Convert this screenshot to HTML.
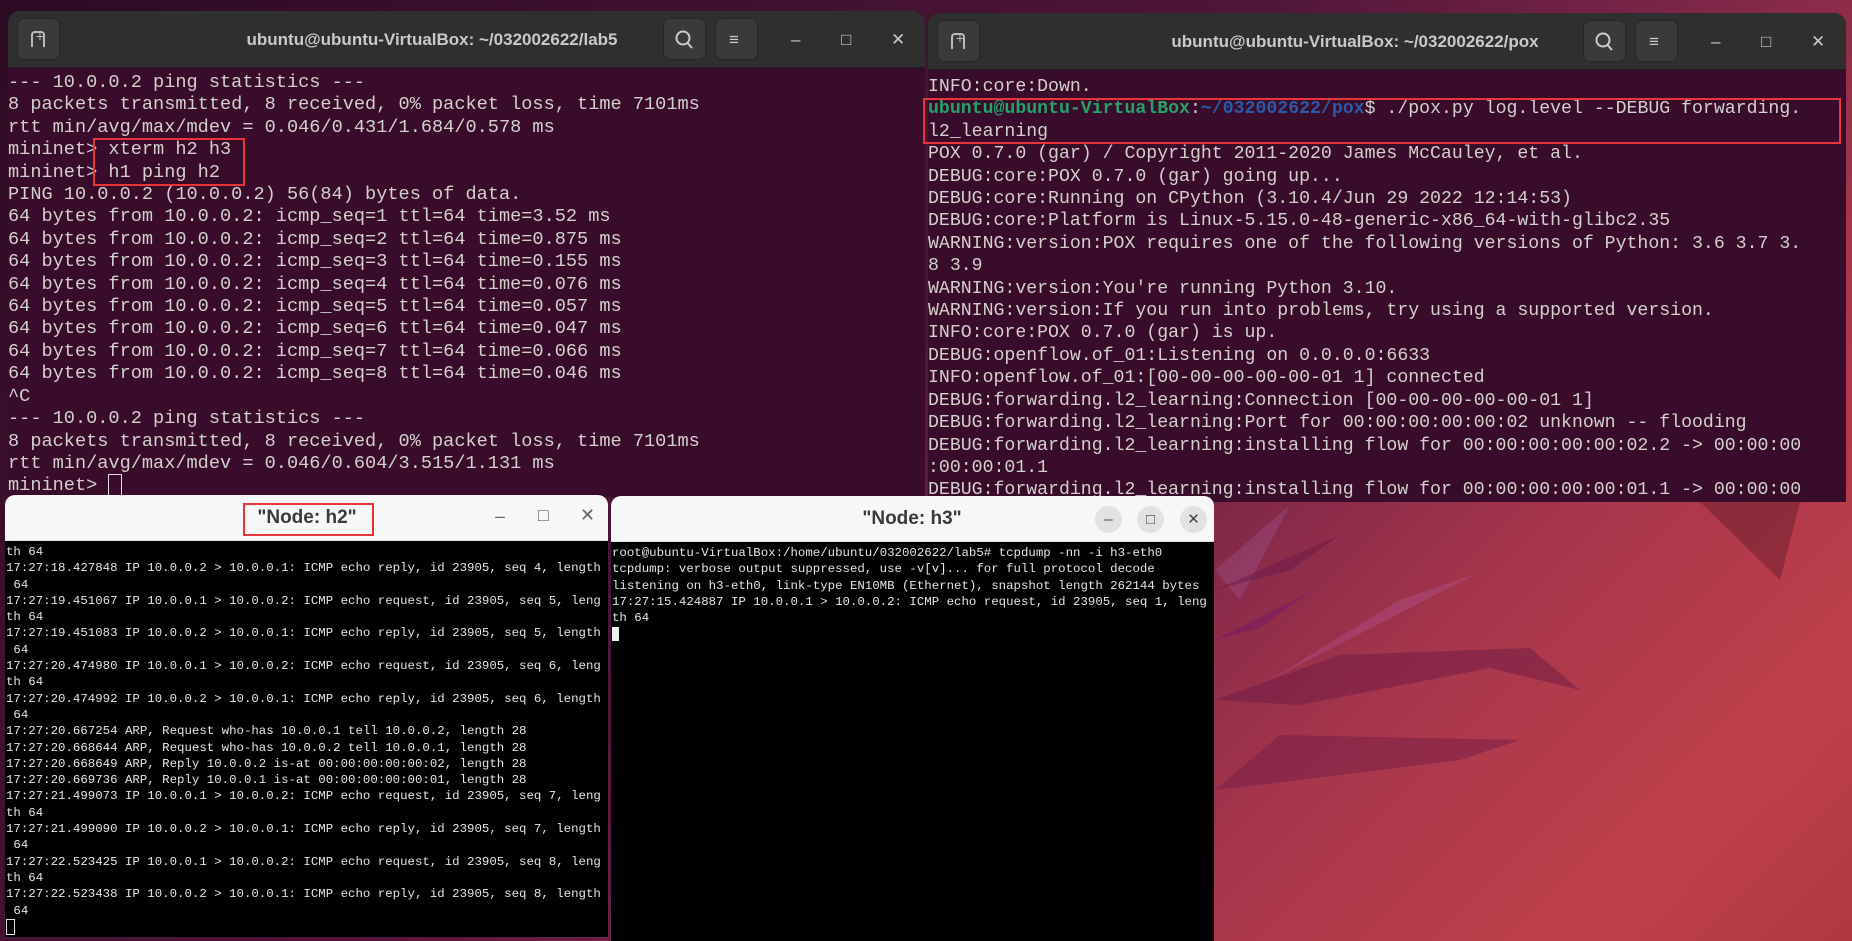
<!DOCTYPE html>
<html><head><meta charset="utf-8"><style>
*{margin:0;padding:0;box-sizing:border-box}
body{width:1852px;height:941px;overflow:hidden;position:relative;font-family:"Liberation Sans",sans-serif;
background:linear-gradient(135deg,#2c0a24 0%,#4e1539 45%,#7a2548 60%,#a8364c 75%,#bf3f4a 90%,#b03842 100%);}
.win{position:absolute;overflow:hidden}
.term{background:#380c2a;border-radius:12px 12px 0 0}
.tb{position:absolute;left:0;right:0;top:0;height:57px;background:#2f2f2f;border-bottom:1px solid #1e1e1e}
.ttl{position:absolute;top:0;height:57px;line-height:57px;color:#c9c9c9;font-weight:bold;font-size:17px;transform:translateX(-50%);white-space:nowrap}
.btn{position:absolute;top:7px;width:43px;height:42px;background:#3a3a3a;border-radius:7px;border:1px solid #262626}
.wc{position:absolute;top:0;height:57px;line-height:57px;color:#c9c9c9;font-size:17px}
pre{position:absolute;font-family:"Liberation Mono",monospace;white-space:pre;margin:0}
.tt{font-size:18.6px;line-height:22.4px;color:#d3d0cc}
.xt{font-size:12.4px;line-height:16.3px;color:#e4e4e4}
.x{background:#000;border-radius:10px 10px 0 0}
.xtb{position:absolute;left:0;right:0;top:0;height:46px;background:#f7f7f7;border-bottom:1px solid #ddd}
.xttl{position:absolute;top:0;height:46px;line-height:46px;font-weight:bold;font-size:19px;color:#3a3a3a;transform:translateX(-50%)}
.rb{position:absolute;border:2px solid #e8353a}
.circ{position:absolute;width:27px;height:27px;border-radius:50%;background:#e2e2e2;color:#444;text-align:center;line-height:27px;font-size:15px}
</style></head><body>
<svg width="1852" height="941" style="position:absolute;left:0;top:0">
<polygon points="1215,570 1290,505 1240,600" fill="#9a4a7e" opacity=".5"/>
<polygon points="1215,590 1340,535 1290,570" fill="#6a1a4a" opacity=".5"/>
<polygon points="1215,640 1310,592 1260,628" fill="#7b1a66" opacity=".6"/>
<polygon points="1270,680 1480,572 1400,600" fill="#b0508a" opacity=".45"/>
<polygon points="1215,700 1340,655 1530,648 1580,690 1490,668 1300,705" fill="#6e1a46" opacity=".5"/>
<polygon points="1215,790 1280,735 1520,740 1460,760 1300,780" fill="#6e1a46" opacity=".45"/>
<polygon points="1700,502 1800,502 1780,580" fill="#4a1020" opacity=".35"/>
</svg>

<!-- Left terminal -->
<div class="win term" style="left:8px;top:11px;width:917px;height:486px">
 <div class="tb">
  <div class="btn" style="left:9px"></div>
  <div style="position:absolute;left:23px;top:20px;width:14px;height:16px;border:2px solid #bbb;border-bottom:none;border-radius:4px 4px 0 0"></div>
  <div style="position:absolute;left:24px;top:17px;color:#bbb;font-size:14px">&nbsp;+</div>
  <div class="ttl" style="left:424px">ubuntu@ubuntu-VirtualBox: ~/032002622/lab5</div>
  <div class="btn" style="left:655px"></div>
  <svg style="position:absolute;left:665px;top:18px" width="22" height="22"><circle cx="10" cy="9" r="6.5" fill="none" stroke="#ccc" stroke-width="2"/><line x1="14.5" y1="14" x2="19" y2="19" stroke="#ccc" stroke-width="2"/></svg>
  <div class="btn" style="left:707px"></div><div class="wc" style="left:721px">&#8801;</div>
  <div class="wc" style="left:783px">&#8211;</div>
  <div class="wc" style="left:833px">&#9633;</div>
  <div class="wc" style="left:883px">&#10005;</div>
 </div>
<pre class="tt" style="left:0;top:61px">--- 10.0.0.2 ping statistics ---
8 packets transmitted, 8 received, 0% packet loss, time 7101ms
rtt min/avg/max/mdev = 0.046/0.431/1.684/0.578 ms
mininet> xterm h2 h3
mininet> h1 ping h2
PING 10.0.0.2 (10.0.0.2) 56(84) bytes of data.
64 bytes from 10.0.0.2: icmp_seq=1 ttl=64 time=3.52 ms
64 bytes from 10.0.0.2: icmp_seq=2 ttl=64 time=0.875 ms
64 bytes from 10.0.0.2: icmp_seq=3 ttl=64 time=0.155 ms
64 bytes from 10.0.0.2: icmp_seq=4 ttl=64 time=0.076 ms
64 bytes from 10.0.0.2: icmp_seq=5 ttl=64 time=0.057 ms
64 bytes from 10.0.0.2: icmp_seq=6 ttl=64 time=0.047 ms
64 bytes from 10.0.0.2: icmp_seq=7 ttl=64 time=0.066 ms
64 bytes from 10.0.0.2: icmp_seq=8 ttl=64 time=0.046 ms
^C
--- 10.0.0.2 ping statistics ---
8 packets transmitted, 8 received, 0% packet loss, time 7101ms
rtt min/avg/max/mdev = 0.046/0.604/3.515/1.131 ms
mininet> <span style="border:1px solid #ddd">&nbsp;</span></pre>
</div>
<div class="rb" style="left:93px;top:138px;width:152px;height:48px"></div>

<!-- Right terminal -->
<div class="win term" style="left:928px;top:13px;width:918px;height:489px">
 <div class="tb">
  <div class="btn" style="left:9px"></div>
  <div style="position:absolute;left:23px;top:20px;width:14px;height:16px;border:2px solid #bbb;border-bottom:none;border-radius:4px 4px 0 0"></div>
  <div style="position:absolute;left:24px;top:17px;color:#bbb;font-size:14px">&nbsp;+</div>
  <div class="ttl" style="left:427px">ubuntu@ubuntu-VirtualBox: ~/032002622/pox</div>
  <div class="btn" style="left:655px"></div>
  <svg style="position:absolute;left:665px;top:18px" width="22" height="22"><circle cx="10" cy="9" r="6.5" fill="none" stroke="#ccc" stroke-width="2"/><line x1="14.5" y1="14" x2="19" y2="19" stroke="#ccc" stroke-width="2"/></svg>
  <div class="btn" style="left:707px"></div><div class="wc" style="left:721px">&#8801;</div>
  <div class="wc" style="left:783px">&#8211;</div>
  <div class="wc" style="left:833px">&#9633;</div>
  <div class="wc" style="left:883px">&#10005;</div>
 </div>
<pre class="tt" style="left:0;top:63px;font-size:18.2px">INFO:core:Down.
<span style="color:#26a269;font-weight:bold">ubuntu@ubuntu-VirtualBox</span>:<span style="color:#2a5aa8;font-weight:bold">~/032002622/pox</span>$ ./pox.py log.level --DEBUG forwarding.
l2_learning
POX 0.7.0 (gar) / Copyright 2011-2020 James McCauley, et al.
DEBUG:core:POX 0.7.0 (gar) going up...
DEBUG:core:Running on CPython (3.10.4/Jun 29 2022 12:14:53)
DEBUG:core:Platform is Linux-5.15.0-48-generic-x86_64-with-glibc2.35
WARNING:version:POX requires one of the following versions of Python: 3.6 3.7 3.
8 3.9
WARNING:version:You're running Python 3.10.
WARNING:version:If you run into problems, try using a supported version.
INFO:core:POX 0.7.0 (gar) is up.
DEBUG:openflow.of_01:Listening on 0.0.0.0:6633
INFO:openflow.of_01:[00-00-00-00-00-01 1] connected
DEBUG:forwarding.l2_learning:Connection [00-00-00-00-00-01 1]
DEBUG:forwarding.l2_learning:Port for 00:00:00:00:00:02 unknown -- flooding
DEBUG:forwarding.l2_learning:installing flow for 00:00:00:00:00:02.2 -> 00:00:00
:00:00:01.1
DEBUG:forwarding.l2_learning:installing flow for 00:00:00:00:00:01.1 -> 00:00:00</pre>
</div>
<div class="rb" style="left:923px;top:98px;width:918px;height:46px"></div>

<!-- Node h2 -->
<div class="win x" style="left:5px;top:495px;width:603px;height:442px">
 <div class="xtb">
  <div class="xttl" style="left:302px">"Node: h2"</div>
  <div style="position:absolute;left:490px;top:11px;color:#666;font-size:18px">&#8211;</div>
  <div style="position:absolute;left:533px;top:10px;color:#666;font-size:18px">&#9633;</div>
  <div style="position:absolute;left:575px;top:10px;color:#666;font-size:18px">&#10005;</div>
 </div>
<pre class="xt" style="left:1px;top:49px">th 64
17:27:18.427848 IP 10.0.0.2 > 10.0.0.1: ICMP echo reply, id 23905, seq 4, length
 64
17:27:19.451067 IP 10.0.0.1 > 10.0.0.2: ICMP echo request, id 23905, seq 5, leng
th 64
17:27:19.451083 IP 10.0.0.2 > 10.0.0.1: ICMP echo reply, id 23905, seq 5, length
 64
17:27:20.474980 IP 10.0.0.1 > 10.0.0.2: ICMP echo request, id 23905, seq 6, leng
th 64
17:27:20.474992 IP 10.0.0.2 > 10.0.0.1: ICMP echo reply, id 23905, seq 6, length
 64
17:27:20.667254 ARP, Request who-has 10.0.0.1 tell 10.0.0.2, length 28
17:27:20.668644 ARP, Request who-has 10.0.0.2 tell 10.0.0.1, length 28
17:27:20.668649 ARP, Reply 10.0.0.2 is-at 00:00:00:00:00:02, length 28
17:27:20.669736 ARP, Reply 10.0.0.1 is-at 00:00:00:00:00:01, length 28
17:27:21.499073 IP 10.0.0.1 > 10.0.0.2: ICMP echo request, id 23905, seq 7, leng
th 64
17:27:21.499090 IP 10.0.0.2 > 10.0.0.1: ICMP echo reply, id 23905, seq 7, length
 64
17:27:22.523425 IP 10.0.0.1 > 10.0.0.2: ICMP echo request, id 23905, seq 8, leng
th 64
17:27:22.523438 IP 10.0.0.2 > 10.0.0.1: ICMP echo reply, id 23905, seq 8, length
 64
<span style="border:1px solid #ddd">&nbsp;</span></pre>
</div>
<div class="rb" style="left:243px;top:503px;width:131px;height:33px"></div>

<!-- Node h3 -->
<div class="win x" style="left:611px;top:496px;width:603px;height:445px">
 <div class="xtb">
  <div class="xttl" style="left:301px">"Node: h3"</div>
  <div class="circ" style="left:484px;top:10px">&#8211;</div>
  <div class="circ" style="left:526px;top:10px">&#9633;</div>
  <div class="circ" style="left:569px;top:10px">&#10005;</div>
 </div>
<pre class="xt" style="left:1px;top:49px">root@ubuntu-VirtualBox:/home/ubuntu/032002622/lab5# tcpdump -nn -i h3-eth0
tcpdump: verbose output suppressed, use -v[v]... for full protocol decode
listening on h3-eth0, link-type EN10MB (Ethernet), snapshot length 262144 bytes
17:27:15.424887 IP 10.0.0.1 > 10.0.0.2: ICMP echo request, id 23905, seq 1, leng
th 64
<span style="background:#eee">&nbsp;</span></pre>
</div>
</body></html>
